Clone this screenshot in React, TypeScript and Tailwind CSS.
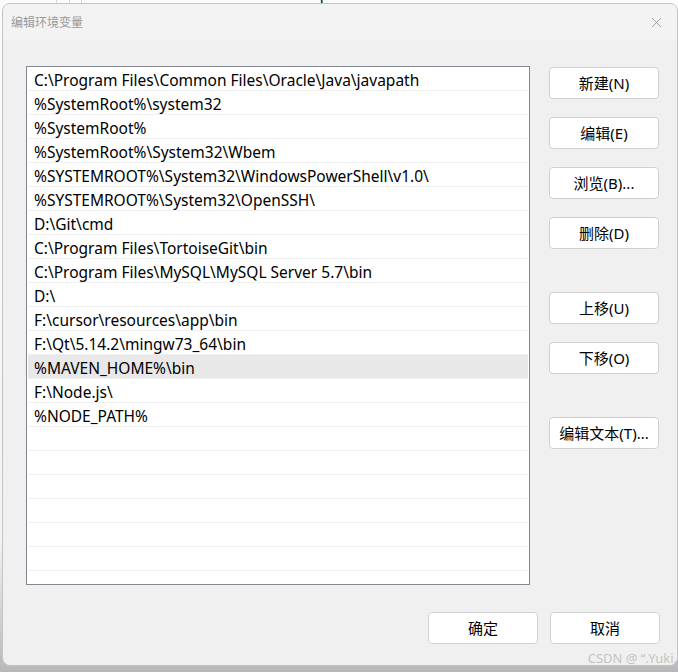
import { X } from "lucide-react";

const paths = [
  "C:\\Program Files\\Common Files\\Oracle\\Java\\javapath",
  "%SystemRoot%\\system32",
  "%SystemRoot%",
  "%SystemRoot%\\System32\\Wbem",
  "%SYSTEMROOT%\\System32\\WindowsPowerShell\\v1.0\\",
  "%SYSTEMROOT%\\System32\\OpenSSH\\",
  "D:\\Git\\cmd",
  "C:\\Program Files\\TortoiseGit\\bin",
  "C:\\Program Files\\MySQL\\MySQL Server 5.7\\bin",
  "D:\\",
  "F:\\cursor\\resources\\app\\bin",
  "F:\\Qt\\5.14.2\\mingw73_64\\bin",
  "%MAVEN_HOME%\\bin",
  "F:\\Node.js\\",
  "%NODE_PATH%",
];

const rows = [...paths, ...Array(6).fill("")];

function Btn({ label, className = "" }: { label: string; className?: string }) {
  return (
    <button
      className={`w-[110px] h-8 rounded-[4px] border border-[#d0d0d0] bg-white text-[15px] text-black flex items-center justify-center ${className}`}
    >
      {label}
    </button>
  );
}

export default function App() {
  return (
    <div
      className="relative w-[678px] h-[672px] overflow-hidden bg-[linear-gradient(to_bottom,#fbfbfb_0%,#f4f4f4_80%,#b8b8b8_100%)]"
      style={{ fontFamily: '"Noto Sans", "Noto Sans CJK SC", sans-serif' }}
    >
      {/* window behind, only a sliver shows */}
      <div className="h-[3px] overflow-hidden flex text-[15px] text-black">
        <div className="ml-[56px] w-px h-full bg-[#d8d8d8]" />
        <div className="ml-[12px] w-px h-full bg-[#d8d8d8]" />
        <div className="ml-[11px] w-px h-full bg-[#d8d8d8]" />
        <span className="ml-[32px] -mt-[16px] leading-5">Chi</span>
        <span className="ml-[140px] -mt-[16px] leading-5">D:\Chip 2024.2.5\bin</span>
      </div>

      <div className="ml-[2px] w-[676px] h-[663px] flex flex-col rounded-[8px] border border-[#c4c4c4] bg-[#f0f0f0] overflow-hidden">
        {/* title bar */}
        <div className="h-[36px] shrink-0 bg-[#f3f3f3] flex items-center justify-between pl-[8px] pr-[12px]">
          <span className="text-[12px] text-[#999999]" style={{ fontFamily: '"Noto Sans CJK SC", sans-serif' }}>
            编辑环境变量
          </span>
          <X className="w-[17px] h-[17px] text-[#8a8a8a]" strokeWidth={1.1} />
        </div>

        {/* body */}
        <div className="flex pl-[23px] pt-[26px] gap-[19px]">
          <div className="w-[504px] h-[519px] border border-[#828790] bg-white px-px overflow-hidden">
            {rows.map((p, i) => (
              <div
                key={i}
                className={`h-6 border-b border-[#f0f0f0] pl-[6px] pt-[4px] flex items-center text-[15.5px] text-black whitespace-nowrap ${
                  i === 12 ? "bg-[#e8e8e8]" : ""
                }`}
              >
                {p}
              </div>
            ))}
          </div>

          <div className="flex flex-col pt-px">
            <Btn label="新建(N)" />
            <Btn label="编辑(E)" className="mt-[18px]" />
            <Btn label="浏览(B)..." className="mt-[18px]" />
            <Btn label="删除(D)" className="mt-[18px]" />
            <Btn label="上移(U)" className="mt-[43px]" />
            <Btn label="下移(O)" className="mt-[18px]" />
            <Btn label="编辑文本(T)..." className="mt-[43px]" />
          </div>
        </div>

        <div className="flex justify-end gap-3 pr-[17px] mt-[27px]">
          <Btn label="确定" />
          <Btn label="取消" />
        </div>
      </div>

      <div className="absolute right-[1px] bottom-[4px] text-[13px] text-[#c4c4c4]">
        CSDN @ “.Yuki.
      </div>
    </div>
  );
}
